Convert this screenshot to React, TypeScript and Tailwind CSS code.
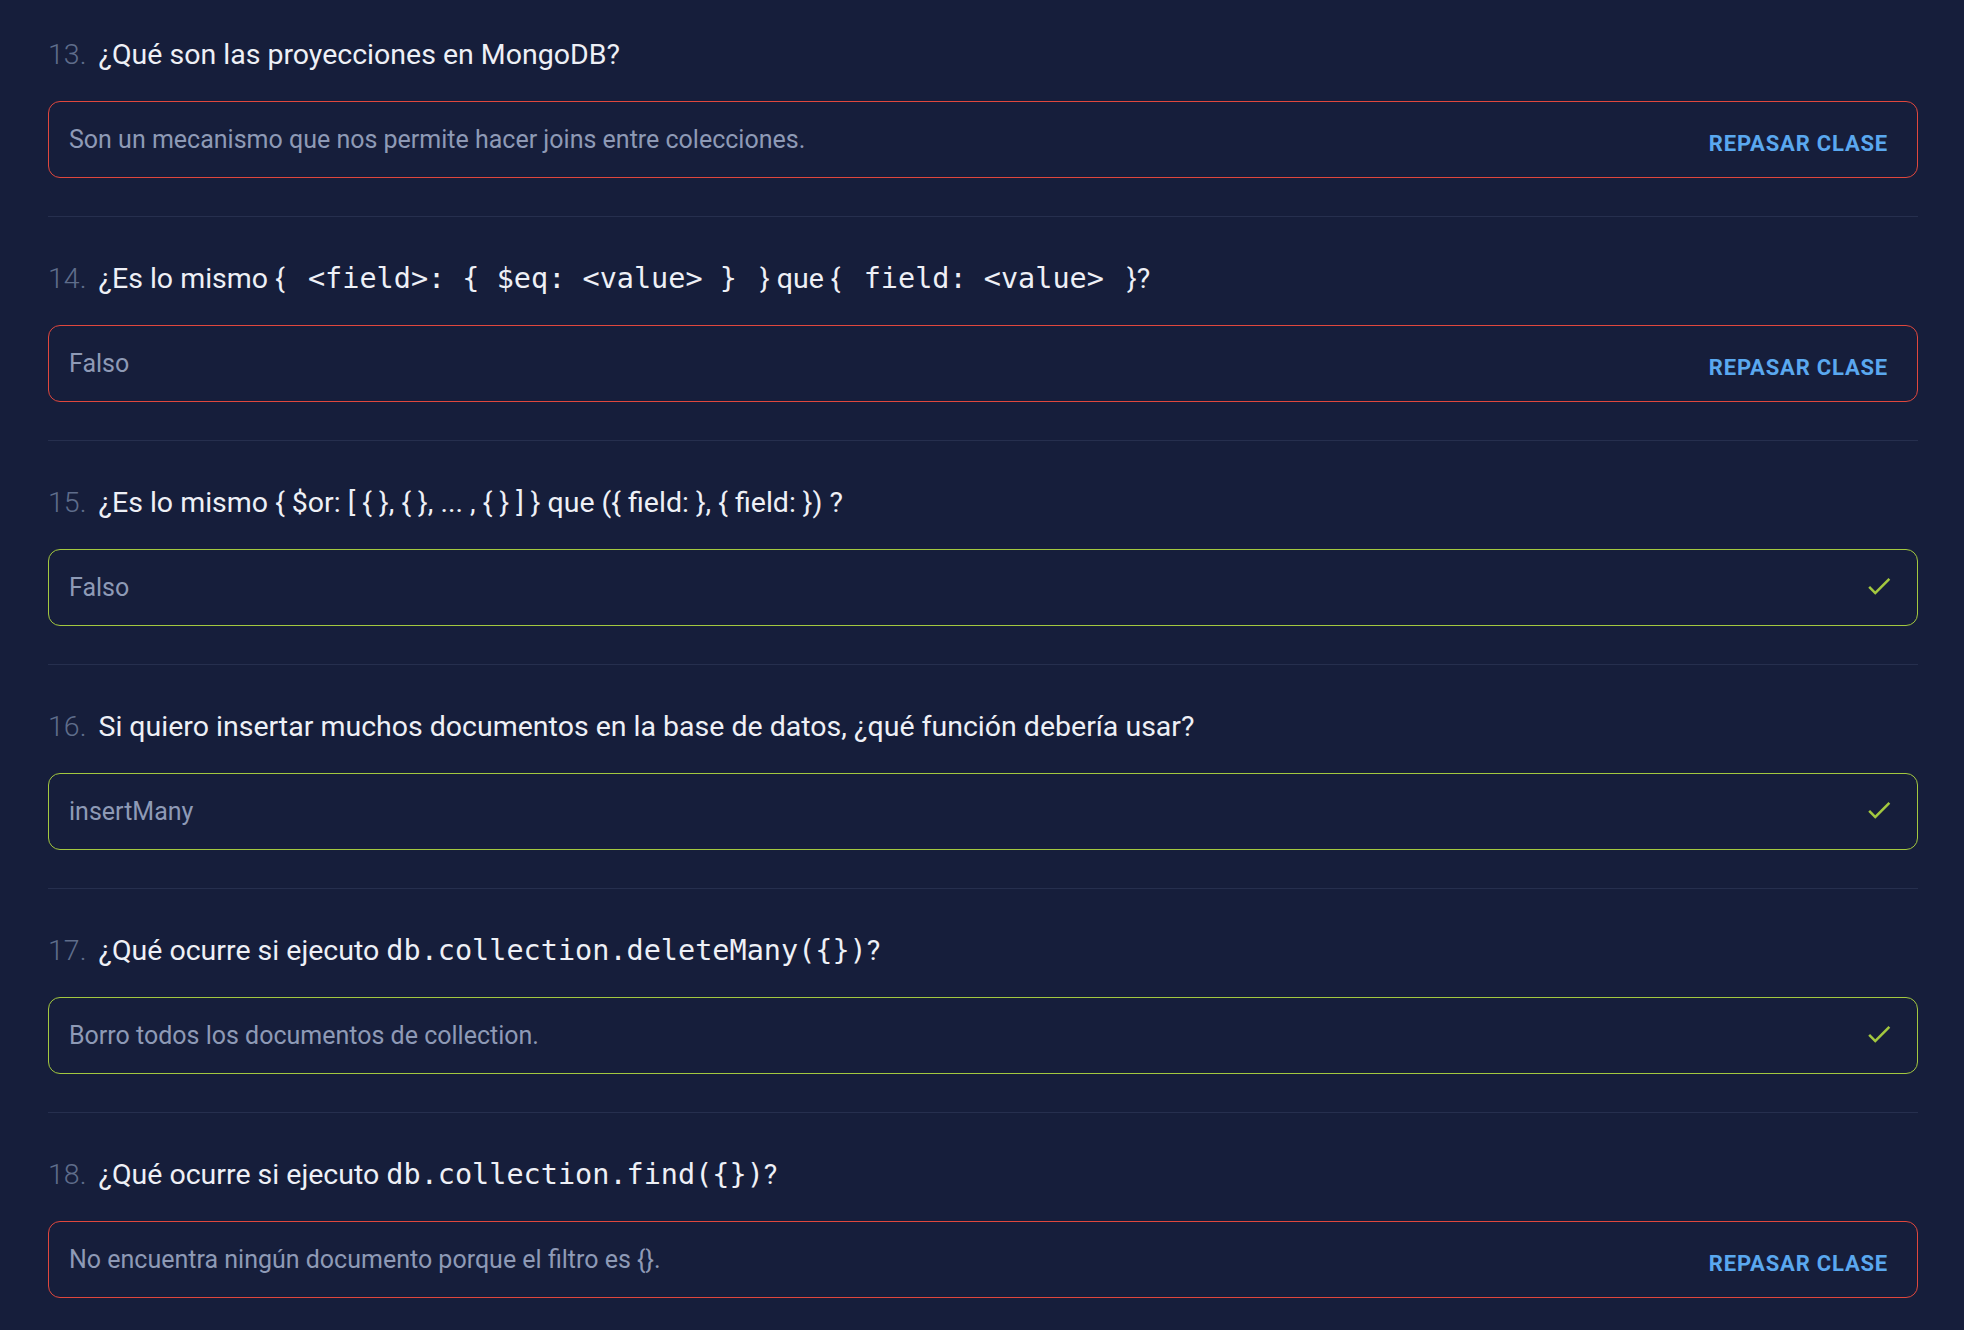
import React from "react";

type Part = { t: string; code?: boolean };

type Item = {
    n: number;
    q: Part[];
    answer: string;
    ok: boolean;
};

const items: Item[] = [
    { n: 13, q: [{ t: "¿Qué son las proyecciones en MongoDB?" }], answer: "Son un mecanismo que nos permite hacer joins entre colecciones.", ok: false },
    {
        n: 14,
        q: [
            { t: "¿Es lo mismo {" },
            { t: "\u00a0<field>: { $eq: <value> }\u00a0", code: true },
            { t: "} que {" },
            { t: "\u00a0field: <value>\u00a0", code: true },
            { t: "}?" },
        ],
        answer: "Falso",
        ok: false,
    },
    { n: 15, q: [{ t: "¿Es lo mismo { $or: [ { }, { }, ... , { } ] } que ({ field: }, { field: }) ?" }], answer: "Falso", ok: true },
    { n: 16, q: [{ t: "Si quiero insertar muchos documentos en la base de datos, ¿qué función debería usar?" }], answer: "insertMany", ok: true },
    {
        n: 17,
        q: [{ t: "¿Qué ocurre si ejecuto " }, { t: "db.collection.deleteMany({})", code: true }, { t: "?" }],
        answer: "Borro todos los documentos de collection.",
        ok: true,
    },
    {
        n: 18,
        q: [{ t: "¿Qué ocurre si ejecuto " }, { t: "db.collection.find({})", code: true }, { t: "?" }],
        answer: "No encuentra ningún documento porque el filtro es {}.",
        ok: false,
    },
];

function CheckIcon() {
    return (
        <svg width="30" height="30" viewBox="0 0 24 24" fill="#a3c83f">
            <path d="M9 16.17 4.83 12l-1.42 1.41L9 19 21 7l-1.41-1.41z" />
        </svg>
    );
}

export default function App() {
    return (
        <div className="min-h-[1330px] w-full bg-[#161e3b] pl-[48px] pr-[46px] font-['Roboto',sans-serif] overflow-hidden">
            <div className="flex flex-col">
                {items.map((item) => (
                    <div
                        key={item.n}
                        className="pt-[42px] first:pt-[35px] pb-[38px] border-b border-[#262f4e]"
                    >
                        <div className="text-[28.5px] leading-[40px] text-[#eef0f6] whitespace-nowrap">
                            <span className="font-light text-[#5f6d8b] mr-[12px]">{item.n}.</span>
                            {item.q.map((p, i) =>
                                p.code ? (
                                    <code
                                        key={i}
                                        className={`font-['DejaVu_Sans_Mono',monospace] text-[28.5px] ${
                                            item.n === 14 ? "px-[6px]" : ""
                                        }`}
                                    >
                                        {p.t}
                                    </code>
                                ) : (
                                    <span key={i}>{p.t}</span>
                                )
                            )}
                        </div>
                        <div
                            className={`mt-[26px] h-[77px] rounded-[12px] border flex items-center justify-between pl-[20px] ${
                                item.ok ? "border-[#a3c83f] pr-[23px]" : "border-[#e0473d] pr-[29px]"
                            }`}
                        >
                            <span className="text-[25px] text-[#8e9ab6]">{item.answer}</span>
                            {item.ok ? (
                                <span className="-mt-[3px]">
                                    <CheckIcon />
                                </span>
                            ) : (
                                <span className="mt-[8px] text-[22px] font-bold tracking-[0.8px] text-[#5aa8ef]">
                                    REPASAR CLASE
                                </span>
                            )}
                        </div>
                    </div>
                ))}
            </div>
        </div>
    );
}
